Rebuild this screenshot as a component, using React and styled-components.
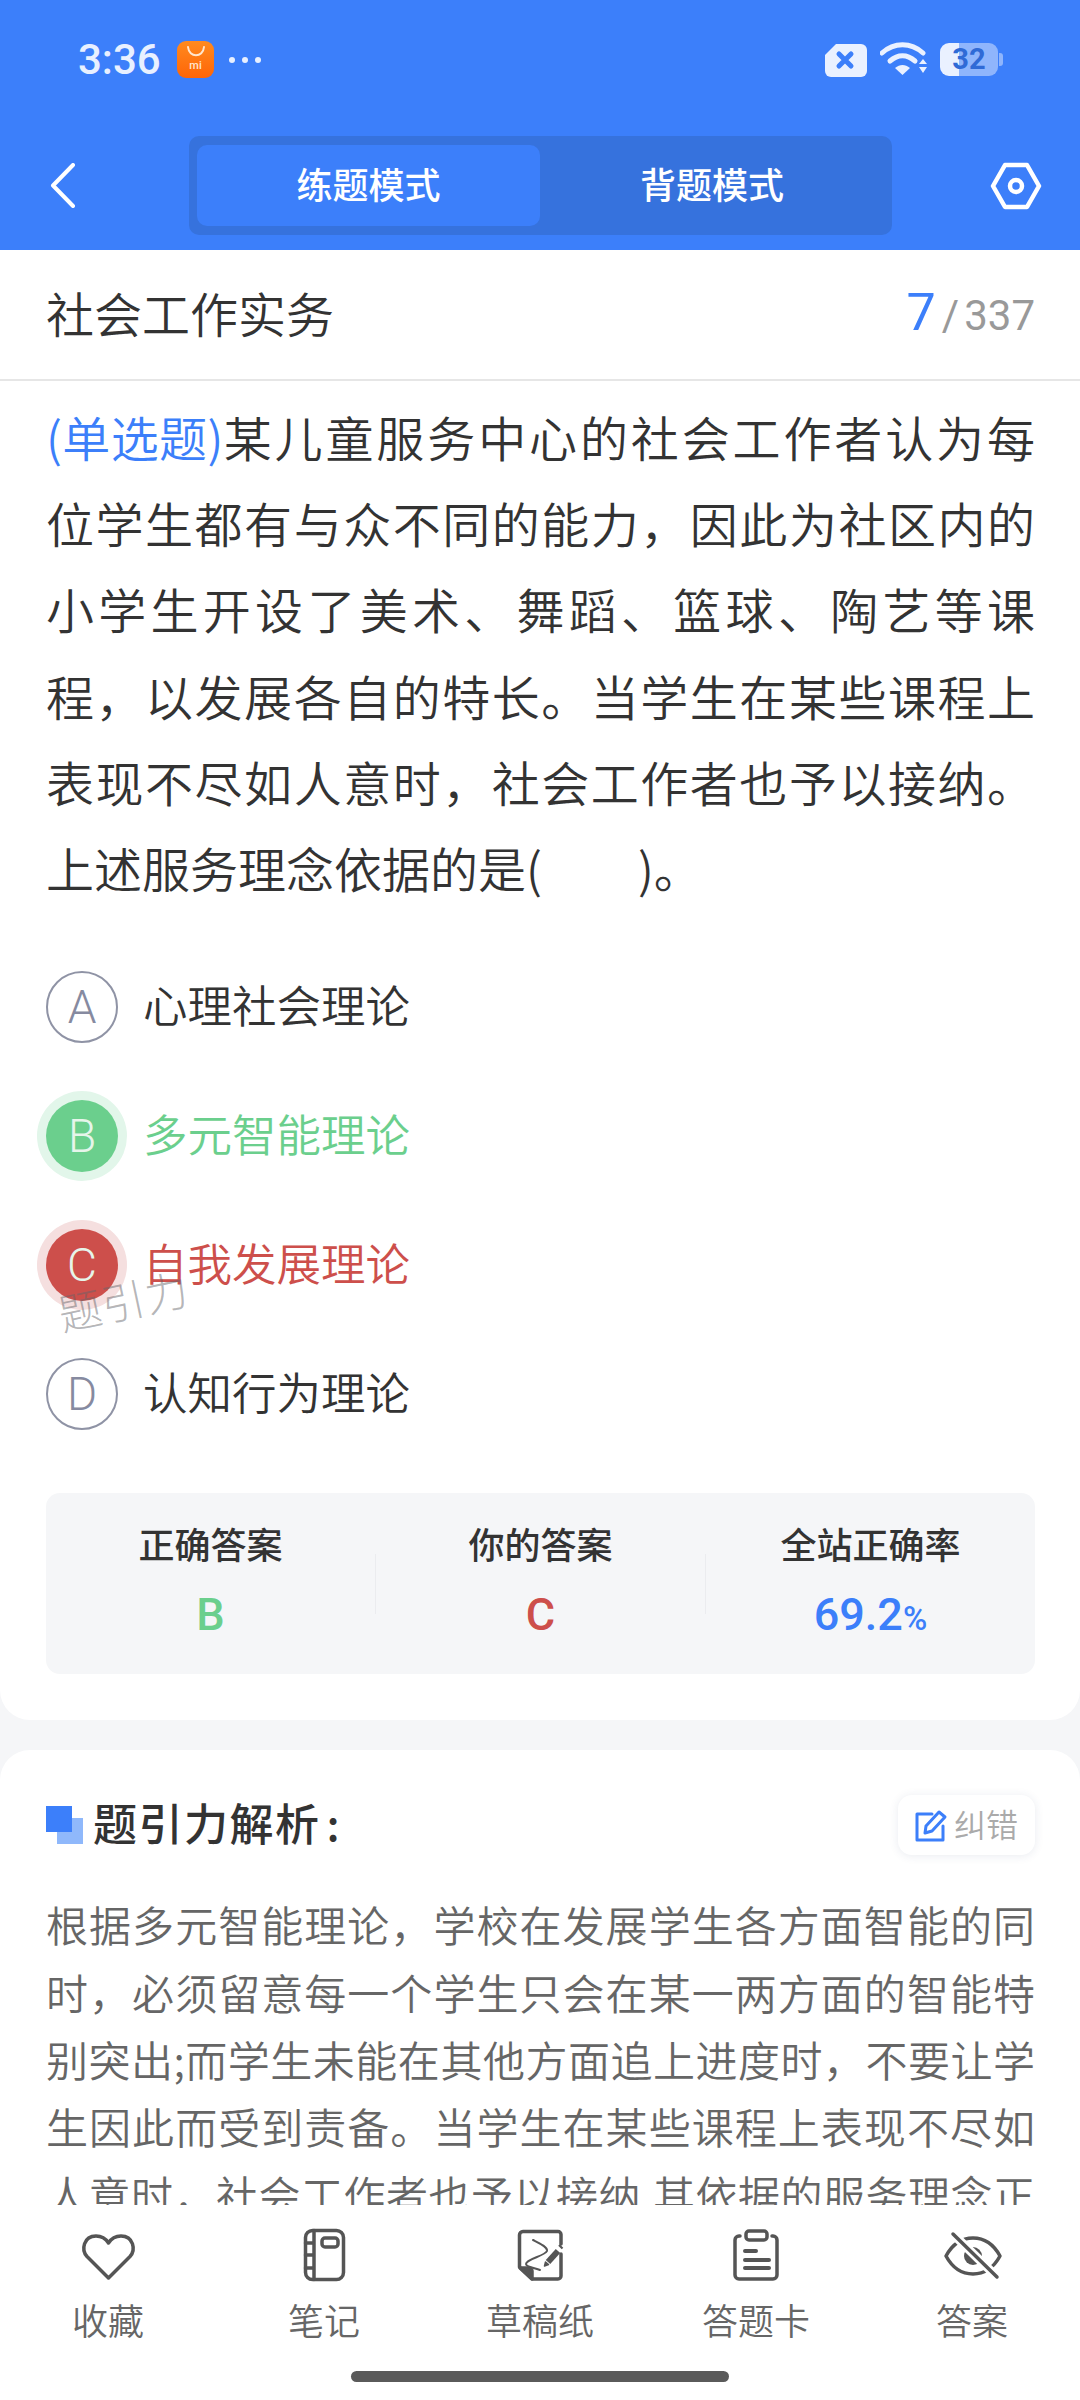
import React from 'react';
import styled, { createGlobalStyle } from 'styled-components';

const CJK = `"Noto Sans CJK SC", "Noto Sans", sans-serif`;
const NUM = `Roboto, "Noto Sans CJK SC", sans-serif`;
const BLUE = '#3c7ffa';

const GlobalStyle = createGlobalStyle`
  html, body { margin: 0; padding: 0; background: #f5f6f8; }
  * { box-sizing: border-box; }
`;

const Page = styled.div`
  width: 1080px;
  height: 2400px;
  display: flex;
  flex-direction: column;
  overflow: hidden;
  background: #f5f6f8;
  font-family: ${CJK};
`;

/* top blue area */
const Header = styled.header`
  height: 250px;
  flex-shrink: 0;
  background: ${BLUE};
  display: flex;
  flex-direction: column;
`;

const StatusBar = styled.div`
  height: 136px;
  padding: 41px 77px 0 78px;
  display: flex;
  justify-content: space-between;
  align-items: flex-start;
`;

const StatusGroup = styled.div`
  height: 37px;
  display: flex;
  align-items: center;
`;

const Clock = styled.span`
  font: 500 42px/37px ${NUM};
  color: #e8f0ff;
  width: 99px;
`;

const AppIcon = styled.div`
  width: 37px;
  height: 37px;
  border-radius: 9px;
  background: linear-gradient(180deg, #ff8a1f, #ff6507);
  display: flex;
  flex-direction: column;
  align-items: center;
  padding-top: 5px;
  color: #ffe6cf;
`;

const AppMark = styled.span`
  font: 500 11px/12px ${NUM};
  margin-top: 3px;
`;

const MoreDots = styled.div`
  margin-left: 15px;
  display: flex;
  gap: 7px;
`;

const Dot = styled.span`
  width: 6px;
  height: 6px;
  border-radius: 50%;
  background: #e8f0ff;
`;

const SimIcon = styled.svg`
  width: 44px;
  height: 34px;
`;

const WifiIcon = styled.svg`
  width: 48px;
  height: 36px;
  margin-left: 12px;
`;

const Battery = styled.div`
  width: 58px;
  height: 33px;
  margin-left: 12px;
  border-radius: 9px;
  background: linear-gradient(90deg, #eaf1ff ${p => p.$level}%, #8fb5fc ${p => p.$level}%);
  color: #2f6ad6;
  font: 700 29px/33px ${NUM};
  text-align: center;
`;

const BatteryNub = styled.span`
  width: 4px;
  height: 13px;
  border-radius: 0 3px 3px 0;
  background: #8fb5fc;
  margin-left: 1px;
`;

const NavBar = styled.nav`
  height: 99px;
  display: grid;
  grid-template-columns: 189px 703px 1fr;
  align-items: center;
`;

const BackIcon = styled.svg`
  width: 26px;
  height: 45px;
  margin-left: 50px;
`;

const ModeSwitch = styled.div`
  height: 99px;
  padding: 9px 8px;
  border-radius: 10px;
  background: #3672dd;
  display: grid;
  grid-template-columns: 343px 1fr;
`;

const ModeTab = styled.div`
  border-radius: 10px;
  background: ${p => (p.$active ? BLUE : 'transparent')};
  color: #fff;
  font-size: 36px;
  font-weight: 500;
  padding-bottom: 6px;
  display: flex;
  align-items: center;
  justify-content: center;
`;

const SettingsIcon = styled.svg`
  width: 52px;
  height: 48px;
  justify-self: end;
  margin-right: 38px;
`;

/* scrolling body */
const Body = styled.main`
  flex: 1;
  min-height: 0;
  overflow: hidden;
`;

const QuestionCard = styled.section`
  background: #fff;
  border-radius: 0 0 30px 30px;
  padding-bottom: 46px;
`;

const TitleBar = styled.div`
  height: 131px;
  padding: 0 45px 0 46px;
  border-bottom: 2px solid #e6e6e6;
  display: flex;
  align-items: center;
  justify-content: space-between;
`;

const Subject = styled.h1`
  margin: 0 0 6px;
  font-size: 48px;
  font-weight: 350;
  color: #333;
`;

const Progress = styled.div`
  display: flex;
  align-items: baseline;
  font: 400 42px/60px ${NUM};
  color: #999;
`;

const ProgressCurrent = styled.span`
  font-size: 52px;
  color: ${BLUE};
  margin-right: 6px;
`;

const ProgressSlash = styled.span`
  margin-right: 5px;
`;

const Stem = styled.p`
  margin: 12px 45px 0 46px;
  font-size: 48px;
  font-weight: 350;
  line-height: 86.2px;
  color: #333;
  text-align: justify;
`;

const StemType = styled.span`
  color: ${BLUE};
  letter-spacing: -2.5px;
`;

const StemJoin = styled.span`
  white-space: nowrap;
`;

const Options = styled.div`
  margin: 32px 45px 0 46px;
  display: flex;
  flex-direction: column;
`;

const optionColors = {
  correct: { text: '#6bcf8d', halo: '#e2f6ea' },
  wrong: { text: '#cd4f4b', halo: '#f5dfdf' },
};

const Option = styled.div`
  position: relative;
  height: 129px;
  display: flex;
  align-items: center;
  gap: 25px;
  font-size: 44.5px;
  font-weight: 350;
  color: ${p => (p.$state ? optionColors[p.$state].text : '#333')};
`;

const OptionBadge = styled.span`
  width: 72px;
  height: 72px;
  border-radius: 50%;
  display: flex;
  align-items: center;
  justify-content: center;
  font: 300 46px/1 ${NUM};
  color: ${p => (p.$state ? '#e6f5ea' : '#868aa0')};
  background: ${p => (p.$state ? optionColors[p.$state].text : 'transparent')};
  border: ${p => (p.$state ? 'none' : '2px solid #8f93a5')};
  box-shadow: ${p => (p.$state ? `0 0 0 9px ${optionColors[p.$state].halo}` : 'none')};
`;

const OptionText = styled.span`
  margin-bottom: 6px;
`;

const Watermark = styled.span`
  position: absolute;
  left: 11px;
  top: 74px;
  font-size: 43px;
  font-weight: 300;
  line-height: 50px;
  color: rgba(100, 100, 105, 0.48);
  transform: rotate(-12deg);
  letter-spacing: 1px;
`;

const Stats = styled.div`
  margin: 35px 45px 0 46px;
  height: 181px;
  border-radius: 14px;
  background: #f5f6f8;
  display: flex;
`;

const StatCell = styled.div`
  flex: 1;
  padding-top: 25px;
  text-align: center;
`;

const StatLabel = styled.div`
  font-size: 36px;
  font-weight: 500;
  line-height: 50px;
  color: #333;
`;

const StatValue = styled.div`
  margin-top: 17px;
  font: 500 45px/60px ${NUM};
  color: ${p => p.$color};
`;

const StatUnit = styled.span`
  font-size: 33px;
`;

const StatDivider = styled.span`
  width: 0;
  height: 60px;
  margin-top: 61px;
  border-left: 1px solid #ebecef;
`;

const AnalysisCard = styled.section`
  margin-top: 30px;
  padding: 45px 45px 0 46px;
  background: #fff;
  border-radius: 30px 30px 0 0;
`;

const AnalysisHead = styled.div`
  display: flex;
  align-items: center;
  justify-content: space-between;
  height: 60px;
`;

const AnalysisTitle = styled.h2`
  margin: 0;
  display: flex;
  align-items: center;
  gap: 10px;
  font-size: 44px;
  font-weight: 500;
  letter-spacing: 1.5px;
  color: #333;
`;

const AnalysisTitleText = styled.span`
  margin-bottom: 6px;
`;

const AnalysisColon = styled.span`
  margin-left: 6px;
`;

const ReportButton = styled.div`
  width: 137px;
  height: 60px;
  border-radius: 14px;
  background: #fff;
  box-shadow: 0 1px 10px rgba(40, 60, 110, 0.1);
  display: flex;
  align-items: center;
  justify-content: center;
  gap: 6px;
  font-size: 32px;
  font-weight: 350;
  color: #aaa;
`;

const ReportLabel = styled.span`
  margin-bottom: 5px;
`;

const AnalysisText = styled.p`
  margin: 35px 0 0;
  font-size: 42px;
  font-weight: 350;
  line-height: 67.4px;
  color: #666;
  text-align: justify;
  text-align-last: justify;
`;

/* bottom tool bar */
const Footer = styled.footer`
  height: 195px;
  flex-shrink: 0;
  background: #fff;
  display: flex;
  flex-direction: column;
  align-items: center;
`;

const Tools = styled.div`
  width: 100%;
  padding-top: 20px;
  display: grid;
  grid-template-columns: repeat(5, 1fr);
`;

const Tool = styled.div`
  display: flex;
  flex-direction: column;
  align-items: center;
  color: #555;
`;

const ToolIcon = styled.svg`
  width: 60px;
  height: 60px;
  fill: none;
  stroke: currentColor;
  stroke-width: 3.5;
  stroke-linecap: round;
  stroke-linejoin: round;
`;

const ToolLabel = styled.span`
  margin-top: 12px;
  font-size: 36px;
  font-weight: 350;
  line-height: 44px;
  color: #666;
`;

const HomeBar = styled.div`
  width: 378px;
  height: 11px;
  margin-top: 30px;
  border-radius: 6px;
  background: #5a5a5a;
`;

const tools = [
  {
    label: '收藏',
    icon: <path d="M30.5 53 9 31.5C3 25 5.5 11 18 11c6 0 10 3 12.5 7 2.5-4 6.5-7 12.5-7 12.5 0 15 14 9 20.5Z" />,
  },
  {
    label: '笔记',
    icon: (
      <>
        <rect x="11.5" y="5.5" width="38" height="49" rx="7" />
        <path d="M20 5.5v49M11.5 18H20M11.5 30H20M11.5 43H20" />
        <rect x="28" y="13" width="16" height="9" rx="3" />
      </>
    ),
  },
  {
    label: '草稿纸',
    icon: (
      <>
        <path d="M51 19V9.5a3 3 0 0 0-3-3H13A3.5 3.5 0 0 0 9.5 10v32L22 54h26a3 3 0 0 0 3-3V29" />
        <path d="M10 43h9a3 3 0 0 1 3 3v8Z" fill="currentColor" />
        <path d="M23 15c6 3 15 7 14 11-2 5-21 8-21 13 0 3 9 4 14 6" strokeWidth="2" />
        <path d="M38 37l10-11" strokeWidth="6" strokeLinecap="butt" />
        <path d="M34.5 41l1-4 3 2.5Z" fill="currentColor" strokeWidth="1.5" />
        <path d="M50 22.5l1.5-1.5" strokeWidth="5" strokeLinecap="butt" />
      </>
    ),
  },
  {
    label: '答题卡',
    icon: (
      <>
        <path d="M14 11h-1a4 4 0 0 0-4 4v35a4 4 0 0 0 4 4h34a4 4 0 0 0 4-4V15a4 4 0 0 0-4-4h-1" />
        <rect x="20" y="6" width="21" height="9" rx="3" />
        <path d="M19 26h11M19 35h24M19 43h24" strokeWidth="4" />
      </>
    ),
  },
  {
    label: '答案',
    icon: (
      <>
        <path d="M4 31c6-11 15-18 27-18s21 7 27 18c-6 11-15 18-27 18S10 42 4 31Z" />
        <circle cx="31" cy="31" r="9" fill="currentColor" stroke="none" />
        <path d="M11 9l44 43" stroke="#fff" strokeWidth="9" />
        <path d="M11 9l44 43" />
      </>
    ),
  },
];

const App = () => (
  <Page>
    <GlobalStyle />
    <Header>
      <StatusBar>
        <StatusGroup>
          <Clock>3:36</Clock>
          <AppIcon>
            <svg width="20" height="11" viewBox="0 0 20 11" fill="none">
              <path d="M2 1c1 11 15 11 16 0" stroke="#ffe6cf" strokeWidth="2" strokeLinecap="round" />
            </svg>
            <AppMark>mi</AppMark>
          </AppIcon>
          <MoreDots>
            <Dot />
            <Dot />
            <Dot />
          </MoreDots>
        </StatusGroup>
        <StatusGroup>
          <SimIcon viewBox="0 0 44 34">
            <path d="M12 1h25a6 6 0 0 1 6 6v21a6 6 0 0 1-6 6H7a6 6 0 0 1-6-6V12Z" fill="#eaf1ff" />
            <path d="M15 11l12 12M27 11 15 23" stroke={BLUE} strokeWidth="5" strokeLinecap="round" />
          </SimIcon>
          <WifiIcon viewBox="0 0 48 36">
            <path d="M2 11C14 0 31 0 43 11" fill="none" stroke="#eaf1ff" strokeWidth="5" strokeLinecap="round" />
            <path d="M10 19c8-7 17-7 25 0" fill="none" stroke="#eaf1ff" strokeWidth="5" strokeLinecap="round" />
            <path d="M15 26c5-4 10-4 15 0l-7.5 7Z" fill="#eaf1ff" />
            <path d="M39 22h8l-4-5ZM39 25h8l-4 6Z" fill="#eaf1ff" />
          </WifiIcon>
          <Battery $level={32}>32</Battery>
          <BatteryNub />
        </StatusGroup>
      </StatusBar>
      <NavBar>
        <BackIcon viewBox="0 0 26 45" fill="none">
          <path d="M23 2 3 22.5 23 43" stroke="#fff" strokeWidth="4" strokeLinecap="round" strokeLinejoin="round" />
        </BackIcon>
        <ModeSwitch>
          <ModeTab $active>练题模式</ModeTab>
          <ModeTab>背题模式</ModeTab>
        </ModeSwitch>
        <SettingsIcon viewBox="0 0 52 48" fill="none" stroke="#fff" strokeWidth="4.5" strokeLinejoin="round">
          <path d="M15 3h22l12 21-12 21H15L3 24Z" />
          <circle cx="26" cy="24" r="6" />
        </SettingsIcon>
      </NavBar>
    </Header>

    <Body>
      <QuestionCard>
        <TitleBar>
          <Subject>社会工作实务</Subject>
          <Progress>
            <ProgressCurrent>7</ProgressCurrent>
            <ProgressSlash>/</ProgressSlash>
            337
          </Progress>
        </TitleBar>
        <Stem>
          <StemType>(单选题)</StemType>
          某儿童服务中心的社会工作者认为每<StemJoin>位学</StemJoin>生都有与众不同的能力，因此为社区内的小学生开设了美术、舞蹈、篮球、陶艺等课程，以发展各自的特长。当学生在某些课程上表现不尽如人意时，社会工作者也予以接纳。上述服务理念依据的是(　　)。
        </Stem>
        <Options>
          <Option>
            <OptionBadge>A</OptionBadge>
            <OptionText>心理社会理论</OptionText>
          </Option>
          <Option $state="correct">
            <OptionBadge $state="correct">B</OptionBadge>
            <OptionText>多元智能理论</OptionText>
          </Option>
          <Option $state="wrong">
            <OptionBadge $state="wrong">C</OptionBadge>
            <OptionText>自我发展理论</OptionText>
            <Watermark>题引力</Watermark>
          </Option>
          <Option>
            <OptionBadge>D</OptionBadge>
            <OptionText>认知行为理论</OptionText>
          </Option>
        </Options>
        <Stats>
          <StatCell>
            <StatLabel>正确答案</StatLabel>
            <StatValue $color="#6bcf8d">B</StatValue>
          </StatCell>
          <StatDivider />
          <StatCell>
            <StatLabel>你的答案</StatLabel>
            <StatValue $color="#cd4f4b">C</StatValue>
          </StatCell>
          <StatDivider />
          <StatCell>
            <StatLabel>全站正确率</StatLabel>
            <StatValue $color={BLUE}>
              69.2<StatUnit>%</StatUnit>
            </StatValue>
          </StatCell>
        </Stats>
      </QuestionCard>

      <AnalysisCard>
        <AnalysisHead>
          <AnalysisTitle>
            <svg width="37" height="38" viewBox="0 0 37 38">
              <rect x="11" y="12" width="26" height="26" fill="#8fb8fb" />
              <rect x="0" y="0" width="26" height="26" fill={BLUE} />
            </svg>
            <AnalysisTitleText>
              题引力解析<AnalysisColon>:</AnalysisColon>
            </AnalysisTitleText>
          </AnalysisTitle>
          <ReportButton>
            <svg width="33" height="33" viewBox="0 0 33 33" fill="none" stroke={BLUE} strokeWidth="3" strokeLinecap="round" strokeLinejoin="round">
              <path d="M17 5H2v26h26V17" />
              <path d="M10 24l1-7L24 3l6 5-13 14Z" />
            </svg>
            <ReportLabel>纠错</ReportLabel>
          </ReportButton>
        </AnalysisHead>
        <AnalysisText>
          根据多元智能理论，学校在发展学生各方面智能的同时，必须留意每一个学生只会在某一两方面的智能特别突出;而学生未能在其他方面追上进度时，不要让学生因此而受到责备。当学生在某些课程上表现不尽如人意时，社会工作者也予以接纳.其依据的服务理念正
        </AnalysisText>
      </AnalysisCard>
    </Body>

    <Footer>
      <Tools>
        {tools.map(tool => (
          <Tool key={tool.label}>
            <ToolIcon viewBox="0 0 60 60">{tool.icon}</ToolIcon>
            <ToolLabel>{tool.label}</ToolLabel>
          </Tool>
        ))}
      </Tools>
      <HomeBar />
    </Footer>
  </Page>
);

export default App;
